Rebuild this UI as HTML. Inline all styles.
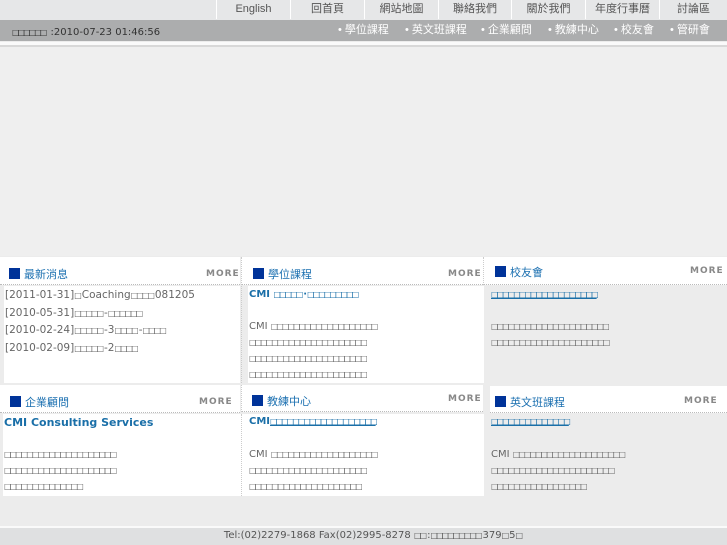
<!DOCTYPE html>
<html><head><meta charset="utf-8"><style>
*{margin:0;padding:0;box-sizing:border-box}
body{width:727px;height:545px;background:#ececec;position:relative;overflow:hidden;font-family:"Liberation Sans","DejaVu Sans","Noto Sans CJK TC",sans-serif}
.a{position:absolute}
.top{left:0;top:0;width:727px;height:20px;background:#e6e7e8}
.nav{top:0;height:19px;line-height:19px;font-size:11px;color:#555;text-align:center;border-left:1px solid #fff}
.bar{left:0;top:20px;width:727px;height:21px;background:#acadae}
.t{font-size:10px;color:#333;font-family:"DejaVu Sans",sans-serif}
.sub{top:22px;font-size:11px;color:#fff;line-height:16px}
.w{background:#fff}
.hd{font-size:11px;color:#1a6fb0;font-family:"DejaVu Sans","Noto Sans CJK TC",sans-serif}
.sq{display:inline-block;width:11px;height:11px;background:#003399;vertical-align:-1px;margin-right:4px}
.more{font-size:9px;color:#888;font-weight:bold;letter-spacing:1px;font-family:"DejaVu Sans",sans-serif}
.dot{border-bottom:1px dotted #bbb}
.vd{border-left:1px dotted #ccc}
.tx{font-family:"DejaVu Sans",sans-serif;font-size:10px;color:#666;line-height:16px}
.tt{font-family:"DejaVu Sans",sans-serif;font-size:10px;color:#1a6fa8;font-weight:bold}
.b{font-size:8px;letter-spacing:-2px;font-weight:normal;padding-right:2px}
</style></head><body>
<div class="a top"></div>
<div class="a nav" style="left:216px;width:74px">English</div>
<div class="a nav" style="left:290px;width:74px">回首頁</div>
<div class="a nav" style="left:364px;width:74px">網站地圖</div>
<div class="a nav" style="left:438px;width:73px">聯絡我們</div>
<div class="a nav" style="left:511px;width:74px">關於我們</div>
<div class="a nav" style="left:585px;width:74px">年度行事曆</div>
<div class="a nav" style="left:659px;width:68px">討論區</div>
<div class="a bar"></div>
<div class="a t" style="left:12px;top:27px"><span class="b">□□□□□□</span> :2010-07-23 01:46:56</div>
<div class="a sub" style="left:338px">• 學位課程</div>
<div class="a sub" style="left:405px">• 英文班課程</div>
<div class="a sub" style="left:481px">• 企業顧問</div>
<div class="a sub" style="left:548px">• 教練中心</div>
<div class="a sub" style="left:614px">• 校友會</div>
<div class="a sub" style="left:670px">• 管研會</div>
<div class="a" style="left:0;top:42px;width:727px;height:3px;background:#fafafa"></div>
<div class="a" style="left:0;top:45px;width:727px;height:2px;background:#d8d8d8"></div>
<div class="a" style="left:0;top:47px;width:727px;height:209px;background:#efefef"></div>

<div class="a w dot" style="left:0;top:257px;width:240px;height:28px"></div>
<div class="a w dot vd" style="left:241px;top:257px;width:242px;height:28px"></div>
<div class="a w dot vd" style="left:483px;top:257px;width:244px;height:28px"></div>
<div class="a hd" style="left:9px;top:266px"><span class="sq"></span>最新消息</div>
<div class="a more" style="left:206px;top:269px">MORE</div>
<div class="a hd" style="left:253px;top:266px"><span class="sq"></span>學位課程</div>
<div class="a more" style="left:448px;top:269px">MORE</div>
<div class="a hd" style="left:495px;top:264px"><span class="sq"></span>校友會</div>
<div class="a more" style="left:690px;top:266px">MORE</div>

<div class="a w" style="left:4px;top:286px;width:236px;height:97px"></div>
<div class="a vd" style="left:241px;top:286px;width:4px;height:97px;background:#ececec"></div>
<div class="a w" style="left:248px;top:286px;width:236px;height:97px"></div>
<div class="a tx" style="left:5px;top:287px;font-size:10.5px;line-height:16.5px">[2011-01-31]<span class="b">□</span>Coaching<span class="b">□□□□</span>081205<br>[2010-05-31]<span class="b">□□□□□</span>-<span class="b">□□□□□□</span><br>[2010-02-24]<span class="b">□□□□□</span>-3<span class="b">□□□□</span>-<span class="b">□□□□</span><br>[2010-02-09]<span class="b">□□□□□</span>-2<span class="b">□□□□</span></div>
<div class="a tt" style="left:249px;top:289px">CMI <span class="b">□□□□□</span>·<span class="b">□□□□□□□□□</span></div>
<div class="a tx" style="left:249px;top:319px">CMI <span class="b">□□□□□□□□□□□□□□□□□□□</span><br><span class="b">□□□□□□□□□□□□□□□□□□□□□</span><br><span class="b">□□□□□□□□□□□□□□□□□□□□□</span><br><span class="b">□□□□□□□□□□□□□□□□□□□□□</span></div>
<div class="a tt" style="left:491px;top:289px;font-weight:normal;text-decoration:underline"><span class="b">□□□□□□□□□□□□□□□□□□□</span></div>
<div class="a tx" style="left:491px;top:319px"><span class="b">□□□□□□□□□□□□□□□□□□□□□</span><br><span class="b">□□□□□□□□□□□□□□□ □□□□□□</span></div>

<div class="a w dot" style="left:0;top:385px;width:240px;height:28px"></div>
<div class="a w dot vd" style="left:241px;top:385px;width:242px;height:27px"></div>
<div class="a w dot" style="left:490px;top:386px;width:237px;height:27px"></div>
<div class="a hd" style="left:10px;top:394px"><span class="sq"></span>企業顧問</div>
<div class="a more" style="left:199px;top:397px">MORE</div>
<div class="a hd" style="left:252px;top:393px"><span class="sq"></span>教練中心</div>
<div class="a more" style="left:448px;top:394px">MORE</div>
<div class="a hd" style="left:495px;top:394px"><span class="sq"></span>英文班課程</div>
<div class="a more" style="left:684px;top:396px">MORE</div>

<div class="a w" style="left:3px;top:414px;width:238px;height:82px"></div>
<div class="a w vd" style="left:241px;top:414px;width:7px;height:82px"></div>
<div class="a w" style="left:248px;top:414px;width:236px;height:82px"></div>
<div class="a tt" style="left:4px;top:416px;font-size:11px">CMI Consulting Services</div>
<div class="a tx" style="left:4px;top:447px"><span class="b">□□□□□□□□□□□□□□□□□□□□</span><br><span class="b">□□□□□□□□□□□□□□□□□□□□</span><br><span class="b">□□□□□□□□□□□□□□</span></div>
<div class="a tt" style="left:249px;top:416px">CMI<span class="b" style="text-decoration:underline">□□□□□□□□□□□□□□□□□□□</span></div>
<div class="a tx" style="left:249px;top:447px">CMI <span class="b">□□□□□□□□□□□□□□□□□□□</span><br><span class="b">□□□□□□□□□□□□□□□□□□□□□</span><br><span class="b">□□□□□ □□□□□□□□□□□□□□□</span></div>
<div class="a tt" style="left:491px;top:416px;font-weight:normal;text-decoration:underline"><span class="b">□□□□□□□□□□□□□□</span></div>
<div class="a tx" style="left:491px;top:447px">CMI <span class="b">□□□□□□□□□□□□□□□□□□□□</span><br><span class="b">□□□□□□□□□□□□□□□□□□□□□□</span><br><span class="b">□□□□□□□□□□□□□□□□□</span></div>

<div class="a" style="left:0;top:526px;width:727px;height:19px;background:#dfe0e1;border-top:2px solid #fafafa"></div>
<div class="a" style="left:0;top:527px;width:727px;text-align:center;font-size:10px;color:#555;line-height:17px;font-family:'DejaVu Sans',sans-serif;padding-left:20px">Tel:(02)2279-1868 Fax(02)2995-8278 <span class="b">□□</span>:<span class="b">□□□□□□□□□</span>379<span class="b">□</span>5<span class="b">□</span></div>
</body></html>
